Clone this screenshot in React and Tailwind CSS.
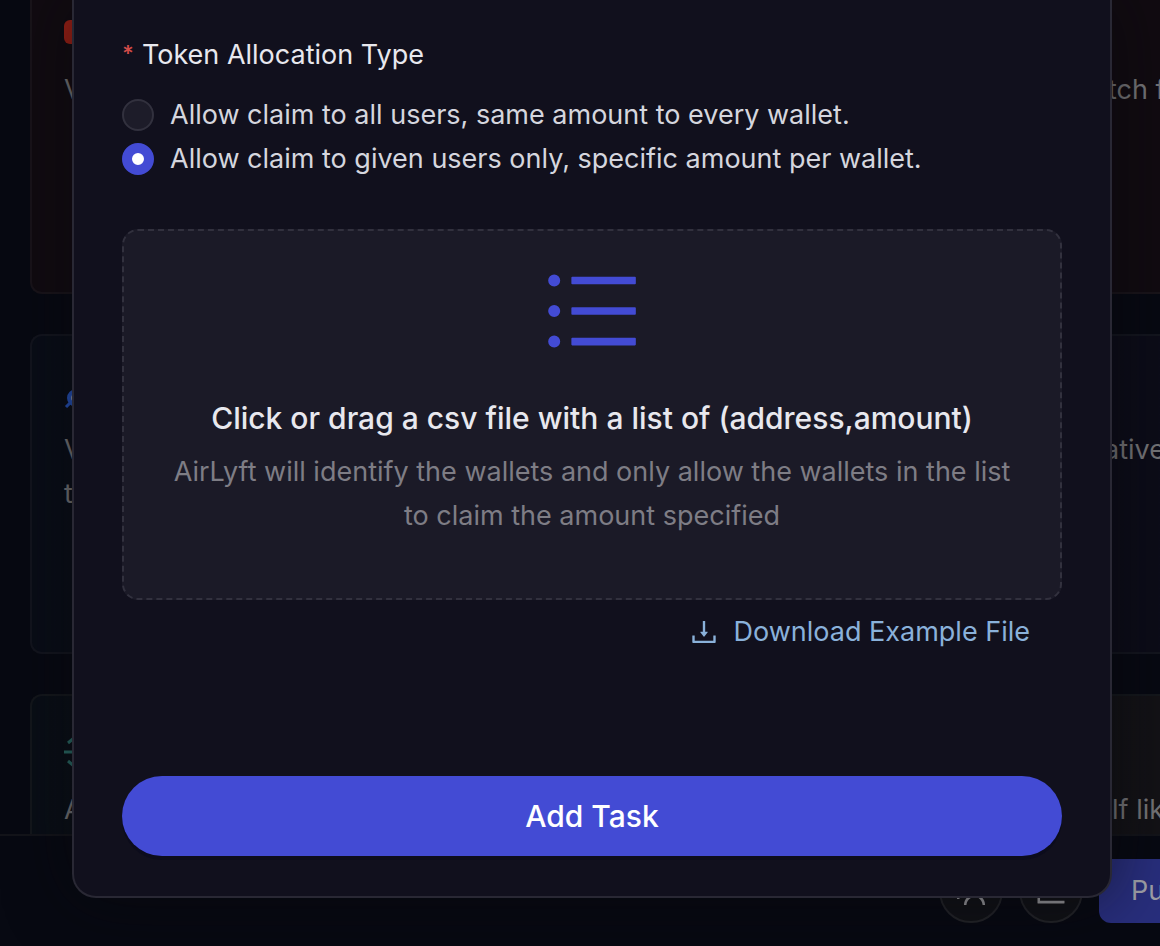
import { useState } from "react";
import {
  AiOutlineBarChart,
  AiOutlineDownload,
  AiOutlineTeam,
  AiOutlineUnorderedList,
} from "react-icons/ai";

function YoutubeBadge() {
  return (
    <svg width="34" height="24" viewBox="0 0 34 24" aria-hidden="true">
      <rect width="34" height="24" rx="6" fill="#9c2015" />
    </svg>
  );
}

function SearchBadge() {
  return (
    <svg width="32" height="32" viewBox="0 0 32 32" fill="none" aria-hidden="true">
      <circle cx="12" cy="22" r="7" fill="#8792a8" stroke="#2450b5" strokeWidth="4" />
      <path d="M2 31l6-6" stroke="#2450b5" strokeWidth="3" />
    </svg>
  );
}

function ArrowsBadge() {
  return (
    <svg width="32" height="32" viewBox="0 0 32 32" fill="none" stroke="#296a65" strokeWidth="3" aria-hidden="true">
      <path d="M0 16h32M4 7l6-5M4 25l6 5" />
    </svg>
  );
}

const cards = [
  { icon: <YoutubeBadge />, start: ["V"], end: "tch f", endWidth: "w-[52px]", tone: "border-[#19141a] bg-[#110b11]" },
  { icon: <SearchBadge />, start: ["V", "t"], end: "ative", endWidth: "w-14", tone: "border-[#13151e] bg-linear-to-r from-[#090d17] to-[#0c0c18]" },
  { icon: <ArrowsBadge />, start: ["A"], end: "lf lik", endWidth: "w-12", tone: "border-[#14171c] bg-linear-to-r from-[#090e16] to-[#131216]" },
];

function TaskCard({ icon, start, end, endWidth, tone }) {
  return (
    <article className={`flex h-80 shrink-0 justify-between rounded-l-xl border-2 border-r-0 pt-[34px] pl-8 ${tone}`}>
      <div>
        <div className="flex h-11 items-center">{icon}</div>
        <p className="mt-3.5">
          {start.map((line) => (
            <span key={line} className="block">{line}</span>
          ))}
        </p>
      </div>
      <p className={`mt-[58px] whitespace-nowrap ${endWidth}`}>{end}</p>
    </article>
  );
}

function Choice({ label, checked, onChange }) {
  return (
    <label className="flex items-center gap-4 text-[#d5d6de]">
      <input
        type="radio"
        name="allocation"
        checked={checked}
        onChange={onChange}
        className="size-8 shrink-0 appearance-none rounded-full border-2 border-[#32313e] bg-[#1d1c29] checked:border-10 checked:border-[#434bd4] checked:bg-white"
      />
      {label}
    </label>
  );
}

export default function App() {
  const [type, setType] = useState("given");
  return (
    <div className="relative h-screen overflow-hidden bg-[#070912] font-['Inter',sans-serif] text-[27px] leading-11">
      <div className="flex h-full flex-col text-[#747477]">
        <main className="-mt-[26px] flex min-h-0 flex-1 flex-col gap-10 overflow-hidden pl-[30px]">
          {cards.map((card) => (
            <TaskCard key={card.end} {...card} />
          ))}
        </main>
        <footer className="flex h-28 shrink-0 items-start justify-end gap-4 border-t-2 border-[#13141a] bg-[#070912] pt-[23px]">
          <button aria-label="Participants" className="flex size-16 items-center justify-center rounded-full border-2 border-[#222328] bg-[#101116] text-[#98989c]">
            <AiOutlineTeam size={36} />
          </button>
          <button aria-label="Statistics" className="flex size-16 items-center justify-center rounded-full border-2 border-[#222328] bg-[#101116] text-[#98989c]">
            <AiOutlineBarChart size={36} />
          </button>
          <button className="h-16 w-[61px] overflow-hidden rounded-l-xl bg-[#282e7c] pl-8 text-left text-[#9fa0a8]">Pu</button>
        </footer>
      </div>

      <div className="absolute inset-0 pr-12 pb-12 pl-[72px]">
        <form
          role="dialog"
          aria-label="Token Allocation Type"
          onSubmit={(e) => e.preventDefault()}
          className="flex h-full flex-col rounded-b-3xl border-2 border-t-0 border-[#292834] bg-[#11101d] px-12 pt-[33px] pb-10 shadow-[0_0_64px_rgba(9,9,11,0.6)]"
        >
          <fieldset>
            <legend className="flex gap-2 text-[#e8e8ee]">
              <span className="text-[22px] font-semibold leading-10 text-[#d14b48]">*</span>
              Token Allocation Type
            </legend>
            <div className="pt-4">
              <Choice
                label="Allow claim to all users, same amount to every wallet."
                checked={type === "all"}
                onChange={() => setType("all")}
              />
              <Choice
                label="Allow claim to given users only, specific amount per wallet."
                checked={type === "given"}
                onChange={() => setType("given")}
              />
            </div>
          </fieldset>

          <button type="button" className="mt-12 flex flex-col items-center rounded-2xl border-2 border-dashed border-[#32313e] bg-[#1b1a27] px-10 pt-[25px] pb-15">
            <AiOutlineUnorderedList size={110} className="text-[#434bd4]" />
            <span className="mt-7 text-[30px] leading-12 font-medium text-[#e8e8ee]">
              Click or drag a csv file with a list of (address,amount)
            </span>
            <span className="mt-2 text-[#7e7d85]">
              AirLyft will identify the wallets and only allow the wallets in the list to claim the amount specified
            </span>
          </button>

          <a href="#example" className="mt-2.5 flex items-center gap-3.5 self-end pr-8 text-[#8ab1da]">
            <AiOutlineDownload size={32} />
            Download Example File
          </a>

          <button type="submit" className="mt-auto h-20 shrink-0 rounded-full bg-[#434bd4] text-[30px] font-medium text-white shadow-[0_4px_0_#0c0c1c]">
            Add Task
          </button>
        </form>
      </div>
    </div>
  );
}
